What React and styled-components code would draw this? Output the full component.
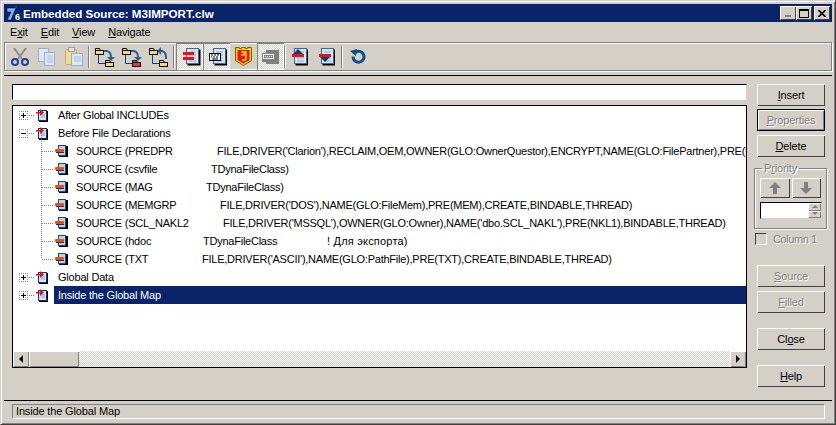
import styled, { createGlobalStyle } from 'styled-components'

const Global = createGlobalStyle`
    html, body { margin: 0; padding: 0; background: #d4d0c8; }
`

const Win = styled.div`
    width: 836px;
    height: 425px;
    box-sizing: border-box;
    background: #d4d0c8;
    border-top: 1px solid #d4d0c8;
    border-left: 1px solid #d4d0c8;
    border-right: 1px solid #404040;
    border-bottom: 1px solid #404040;
    box-shadow: inset 1px 1px 0 #fff, inset -1px -1px 0 #808080;
    padding: 3px 3px 2px 3px;
    display: flex;
    flex-direction: column;
    font-family: 'Liberation Sans', Arial, sans-serif;
    font-size: 11px;
    letter-spacing: -0.15px;
    color: #000;
    overflow: hidden;
`

const TitleBar = styled.div`
    height: 18px;
    flex: none;
    background: #0a246a;
    color: #fff;
    display: flex;
    align-items: center;
    padding: 0 2px;
    font-size: 11.6px;
    letter-spacing: 0;
    font-weight: bold;
`

const TitleText = styled.span`
    flex: 1;
    margin-left: 1px;
`

const CapButton = styled.div`
    width: 16px;
    height: 14px;
    background: #d4d0c8;
    box-shadow: inset 1px 1px 0 #fff, inset -1px -1px 0 #404040;
    margin-left: ${({ $gap }) => $gap || 0}px;
    display: flex;
    align-items: center;
    justify-content: center;
`

const MenuBar = styled.div`
    height: 20px;
    flex: none;
    display: flex;
    align-items: center;
    padding-left: 6px;
    gap: 13px;
`

const Under = styled.span`
    text-decoration: underline;
`

const ToolBar = styled.div`
    height: 29px;
    flex: none;
    box-sizing: border-box;
    border: 1px solid #808080;
    box-shadow: 1px 1px 0 #fff, inset 1px 1px 0 #fff;
    display: flex;
    align-items: center;
    padding-left: 1px;
`

const ToolButton = styled.div`
    width: 27px;
    height: 25px;
    flex: none;
    display: flex;
    align-items: center;
    justify-content: center;
    ${({ $on }) => $on && `
        height: 27px;
        background-color: #fff;
        background-image: conic-gradient(#d4d0c8 25%, #fff 0 50%, #d4d0c8 0 75%, #fff 0);
        background-size: 2px 2px;
        box-shadow: inset 1px 1px 0 #808080, inset -1px -1px 0 #fff;
    `}
    ${({ $flat }) => $flat && `
        height: 27px;
        box-shadow: inset 0 -1px 0 #fff;
    `}
`

const ToolSep = styled.div`
    width: 2px;
    height: 22px;
    flex: none;
    margin: 0 ${({ $tight }) => ($tight ? 0 : 1)}px;
    background: #808080;
    border-right: 1px solid #fff;
    box-sizing: border-box;
`

const Rule = styled.div`
    height: 1px;
    flex: none;
    margin-top: 4px;
    background: #000;
`

const Body = styled.div`
    flex: 1;
    min-height: 0;
    display: flex;
    padding: 8px 0 0 8px;
`

const LeftCol = styled.div`
    width: 735px;
    display: flex;
    flex-direction: column;
    gap: 5px;
`

const Input = styled.div`
    height: 16px;
    flex: none;
    box-sizing: border-box;
    background: #fff;
    border: 1px solid #000;
    border-right-color: #d4d0c8;
    border-bottom-color: #fff;
`

const Tree = styled.div`
    height: 263px;
    flex: none;
    box-sizing: border-box;
    background: #fff;
    border: 1px solid #000;
    display: flex;
    flex-direction: column;
`

const Rows = styled.div`
    flex: 1;
    min-height: 0;
    overflow: hidden;
`

const Row = styled.div`
    height: 18px;
    display: flex;
    align-items: center;
    white-space: nowrap;
    position: relative;
    padding-left: ${({ $child }) => ($child ? 28 : 6)}px;
`

const Expander = styled.div`
    width: 9px;
    height: 9px;
    flex: none;
    box-sizing: border-box;
    border: 1px dotted #6a8fb5;
    background: #fff;
    position: relative;
    &::before {
        content: '';
        position: absolute;
        left: 1px;
        top: 3px;
        width: 5px;
        height: 1px;
        background: #000;
    }
    &::after {
        content: '';
        display: ${({ $open }) => ($open ? 'none' : 'block')};
        position: absolute;
        left: 3px;
        top: 1px;
        width: 1px;
        height: 5px;
        background: #000;
    }
`

const Dots = styled.div`
    width: ${({ $w }) => $w}px;
    flex: none;
    height: 1px;
    margin: 0 1px;
    background-image: linear-gradient(90deg, #808080 50%, transparent 50%);
    background-size: 2px 1px;
`

const Branch = styled.div`
    position: absolute;
    left: 28px;
    top: -9px;
    width: 1px;
    height: 18px;
    background-image: linear-gradient(#808080 50%, transparent 50%);
    background-size: 1px 2px;
`

const Label = styled.span`
    margin-left: 6px;
    height: 18px;
    line-height: 18px;
    flex: 1;
    padding-left: 4px;
    min-width: 0;
    letter-spacing: -0.2px;
    background: ${({ $sel }) => ($sel ? '#0a246a' : 'transparent')};
    color: ${({ $sel }) => ($sel ? '#fff' : '#000')};
`

const SrcLabel = styled.span`
    margin-left: 8px;
    display: flex;
`

const SrcName = styled.span`
    width: ${({ $w }) => $w}px;
    flex: none;
    letter-spacing: -0.2px;
`

const SrcRest = styled.span`
    width: ${({ $w }) => ($w ? `${$w}px` : 'auto')};
    flex: none;
    letter-spacing: -0.24px;
`

const SrcNote = styled.span`
    letter-spacing: 0.2px;
`

const HScroll = styled.div`
    height: 16px;
    flex: none;
    display: flex;
    background-color: #fff;
    background-image: conic-gradient(#d4d0c8 25%, #fff 0 50%, #d4d0c8 0 75%, #fff 0);
    background-size: 2px 2px;
`

const ScrollBtn = styled.div`
    width: ${({ $w }) => $w || 16}px;
    height: 16px;
    flex: none;
    box-sizing: border-box;
    background: #d4d0c8;
    box-shadow: inset 1px 1px 0 #fff, inset -1px -1px 0 #808080, inset 0 -1px 0 #404040;
    display: flex;
    align-items: center;
    justify-content: center;
    margin-left: ${({ $push }) => ($push ? 'auto' : '0')};
`

const Side = styled.div`
    width: 68px;
    margin-left: 10px;
    display: flex;
    flex-direction: column;
`

const Btn = styled.div`
    height: 22px;
    flex: none;
    box-sizing: border-box;
    background: #d4d0c8;
    box-shadow: inset 1px 1px 0 #fff, inset -1px -1px 0 #404040;
    display: flex;
    align-items: center;
    justify-content: center;
    margin-top: ${({ $mt }) => $mt || 0}px;
    color: ${({ $off }) => ($off ? '#808080' : '#000')};
    text-shadow: ${({ $off }) => ($off ? '1px 1px 0 #fff' : 'none')};
    ${({ $def }) => $def && `
        border: 1px solid #000;
        box-shadow: inset 1px 1px 0 #fff, inset -1px -1px 0 #808080;
    `}
`

const Group = styled.fieldset`
    margin: 5px -2px 0 -3px;
    padding: 0 5px;
    height: 67px;
    box-sizing: border-box;
    border: 1px solid #808080;
    box-shadow: 1px 1px 0 #fff, inset 1px 1px 0 #fff;
    color: #808080;
    text-shadow: 1px 1px 0 #fff;
    display: block;
    min-width: 0;
`

const Legend = styled.legend`
    padding: 0 2px;
    margin-left: 2px;
    line-height: 12px;
`

const ArrowRow = styled.div`
    display: flex;
    gap: 2px;
    margin-top: 4px;
`

const ArrowBtn = styled.div`
    width: 30px;
    height: 20px;
    background: #d4d0c8;
    box-shadow: inset 1px 1px 0 #fff, inset -1px -1px 0 #404040;
    display: flex;
    align-items: center;
    justify-content: center;
`

const Spin = styled.div`
    margin-top: 4px;
    height: 17px;
    width: 62px;
    box-sizing: border-box;
    background: #fff;
    border: 1px solid #000;
    border-right-color: #d4d0c8;
    border-bottom-color: #d4d0c8;
    display: flex;
    justify-content: flex-end;
`

const SpinCol = styled.div`
    width: 13px;
    display: flex;
    flex-direction: column;
`

const SpinBtn = styled.div`
    flex: 1;
    background: #d4d0c8;
    box-shadow: inset 1px 1px 0 #fff, inset -1px -1px 0 #808080;
    display: flex;
    align-items: center;
    justify-content: center;
`

const CheckRow = styled.div`
    display: flex;
    align-items: center;
    gap: 6px;
    margin: 3px 0 0 -2px;
    height: 13px;
    color: #808080;
    text-shadow: 1px 1px 0 #fff;
    white-space: nowrap;
    letter-spacing: -0.4px;
`

const CheckBox = styled.div`
    width: 12px;
    height: 12px;
    flex: none;
    box-sizing: border-box;
    border: 1px solid #404040;
    border-right-color: #fff;
    border-bottom-color: #fff;
`

const Status = styled.div`
    flex: none;
    border-top: 1px solid #000;
    padding: 3px 7px 3px 8px;
`

const StatusPane = styled.div`
    height: 15px;
    line-height: 13px;
    box-sizing: border-box;
    padding-left: 3px;
    border: 1px solid #808080;
    border-right-color: #fff;
    border-bottom-color: #fff;
`

function Tri({ dir }) {
    const pts = { left: '5,0 5,8 1,4', right: '1,0 1,8 5,4', up: '0,3 6,3 3,0', down: '0,0 6,0 3,3' }
    const small = dir === 'up' || dir === 'down'
    return (
        <svg width="6" height={small ? 4 : 8}>
            <polygon points={pts[dir]} fill={small ? '#808080' : '#000'} />
        </svg>
    )
}

function NodeIcon() {
    return (
        <svg width="12" height="13" viewBox="0 0 12 13" style={{ flex: 'none' }}>
            <rect x="2.5" y="1.5" width="8" height="10" fill="#d6e4f5" stroke="#12306a" />
            <path d="M5 6h4M5 8h4" stroke="#8aa8cc" />
            <rect x="3" y="12" width="9" height="1" fill="#000" />
            <rect x="11" y="2" width="1" height="11" fill="#000" />
            <path d="M0 3h4V0l4 3.5L4 7V4.500H0z" fill="#e81010" />
        </svg>
    )
}

function SrcIcon() {
    return (
        <svg width="13" height="12" viewBox="0 0 13 12" style={{ flex: 'none' }}>
            <rect x="3.5" y="0.5" width="7" height="10" fill="#bcd2ea" stroke="#1a4a8a" />
            <rect x="4" y="11" width="9" height="1" fill="#000" />
            <rect x="11" y="1" width="2" height="11" fill="#000" />
            <rect x="0" y="4" width="9" height="3" rx="1" fill="#e85010" />
            <rect x="1" y="7" width="8" height="1" fill="#12306a" />
        </svg>
    )
}

function Doc({ x = 0, y = 0, fill = '#dbe6f4', w = 13, h = 16 }) {
    return (
        <g transform={`translate(${x} ${y})`}>
            <rect x="1.500" y="1.500" width={w} height={h} fill="#000" />
            <rect x="0.5" y="0.5" width={w - 1} height={h - 1} fill={fill} stroke="#3a68a0" />
            <path d={`M3 4h${w - 6}M3 7h${w - 6}M3 10h${w - 6}M3 13h${w - 6}`} stroke="#8aa8cc" />
        </g>
    )
}

function Scissors() {
    return (
        <svg width="18" height="18" viewBox="0 0 18 18">
            <path d="M3 0l8 11M15 0L7 11" stroke="#8c8c8c" strokeWidth="2" />
            <circle cx="4" cy="14" r="3" fill="none" stroke="#1f3f9c" strokeWidth="2" />
            <circle cx="14" cy="14" r="3" fill="none" stroke="#1f3f9c" strokeWidth="2" />
        </svg>
    )
}

function CopyIcon() {
    return (
        <svg width="18" height="18" viewBox="0 0 18 18">
            <rect x="0.5" y="0.5" width="10" height="13" fill="#dce6f5" stroke="#9ab0d0" />
            <rect x="6.5" y="4.5" width="10" height="13" fill="#dce6f5" stroke="#9ab0d0" />
            <path d="M9 8h6M9 10h6M9 12h6M9 14h6" stroke="#aac0dc" />
        </svg>
    )
}

function PasteIcon() {
    return (
        <svg width="18" height="19" viewBox="0 0 18 19">
            <rect x="0.5" y="2.5" width="11" height="15" rx="1" fill="#f6d98c" stroke="#c8a860" />
            <rect x="3.5" y="0.5" width="6" height="4" fill="#e8e4d8" stroke="#a0a0a0" />
            <rect x="6.5" y="6.5" width="11" height="12" fill="#dce6f5" stroke="#9ab0d0" />
            <path d="M9 10h7M9 12h7M9 14h7" stroke="#aac0dc" />
        </svg>
    )
}

function Folder({ x, y, fill = '#ffd860' }) {
    return (
        <g transform={`translate(${x} ${y})`}>
            <path d="M0.5 2.5V0.5h4l1 2z" fill={fill} stroke="#000" />
            <rect x="0.5" y="2.5" width="8" height="4" fill={fill} stroke="#000" />
        </g>
    )
}

function FolderMove({ red, back }) {
    return (
        <svg width="20" height="20" viewBox="0 0 20 20">
            <path d="M3.5 8v8.500H11" fill="none" stroke="#12406e" />
            <path d={back ? 'M9 4h4q4 1 4 6v2' : 'M9 4h3q4 1 4 6'} fill="none" stroke="#2a5f9a" strokeWidth="2" />
            {back
                ? <polygon points="12,0 12,8 8,4" fill="#2a5f9a" />
                : <polygon points="12,10 20,10 16,14" fill="#2a5f9a" />}
            <Folder x={0} y={1} />
            <Folder x={10} y={13} fill={red ? '#ee3344' : '#ffd860'} />
        </svg>
    )
}

function RedLines() {
    return (
        <svg width="18" height="18" viewBox="0 0 18 18" style={{ marginLeft: 5 }}>
            <Doc x={3} y={0} />
            <rect x="0" y="4" width="11" height="3" fill="#ee1111" />
            <rect x="0" y="9" width="11" height="3" fill="#ee1111" />
        </svg>
    )
}

function Keys() {
    return (
        <svg width="18" height="18" viewBox="0 0 18 18" style={{ marginLeft: 3 }}>
            <Doc x={4} y={0} />
            <rect x="0.5" y="5.5" width="11" height="7" fill="#fff" stroke="#000" />
            <path d="M2 7h2M5 7h2M8 7h2M2 9h1M4 9h2M7 9h2M3 11h6" stroke="#000" />
        </svg>
    )
}

function Shield() {
    return (
        <svg width="17" height="19" viewBox="0 0 17 19">
            <path d="M0.5 0.5h4v1h2v-1h4v1h2v-1h4v13l-8 5-8-5z" fill="#e8d810" stroke="#806000" />
            <path d="M2.500 3h12v10l-6 3.500-6-3.500z" fill="#ee1122" />
            <path d="M6 5h5v6q0 3-4 2M9 5v3H6" fill="none" stroke="#e8d810" strokeWidth="1.6" />
        </svg>
    )
}

function GreyBox() {
    return (
        <svg width="17" height="14" viewBox="0 0 17 14">
            <path d="M4 0h13v14H4z M0 3h4v9H0z" fill="#808080" />
            <rect x="1.500" y="4.500" width="10" height="4" fill="#808080" stroke="#fff" />
            <path d="M3 6.500h7" stroke="#fff" strokeDasharray="1 1" />
        </svg>
    )
}

function DocArrow({ down }) {
    return (
        <svg width="16" height="18" viewBox="0 0 16 18">
            <Doc x={2} y={0} h={16} />
            <rect x="0" y="6" width="12" height="3" fill="#ee1111" />
            {down
                ? <polygon points="1,9 11,9 6,14" fill="#0a3a80" />
                : <polygon points="1,6 11,6 6,1" fill="#0a3a80" />}
        </svg>
    )
}

function Refresh() {
    return (
        <svg width="16" height="15" viewBox="0 0 16 15">
            <path d="M5 3.500a5.500 5.500 0 1 1-2 4" fill="none" stroke="#0f4a8a" strokeWidth="3" />
            <polygon points="0,2 7,0 6,7" fill="#0f4a8a" />
        </svg>
    )
}

function AppLogo() {
    return (
        <svg width="16" height="16" viewBox="0 0 16 16">
            <path d="M1 3h9L5 15H1l4-8H1z" fill="#7fb0f0" stroke="#000030" strokeWidth="0.5" />
            <path d="M8 0l1 2 2-1-1 2z" fill="#3f6fd0" />
            <text x="9" y="15" fontSize="9" fontWeight="bold" fontFamily="Liberation Sans" fill="#fff">6</text>
        </svg>
    )
}

const SOURCES = [
    { name: 'SOURCE (PREDPR', w: 141, rest: "FILE,DRIVER('Clarion'),RECLAIM,OEM,OWNER(GLO:OwnerQuestor),ENCRYPT,NAME(GLO:FilePartner),PRE(FIL),CREATE" },
    { name: 'SOURCE (csvfile', w: 135, rest: 'TDynaFileClass)' },
    { name: 'SOURCE (MAG', w: 130, rest: 'TDynaFileClass)' },
    { name: 'SOURCE (MEMGRP', w: 144, rest: "FILE,DRIVER('DOS'),NAME(GLO:FileMem),PRE(MEM),CREATE,BINDABLE,THREAD)" },
    { name: 'SOURCE (SCL_NAKL2', w: 147, rest: "FILE,DRIVER('MSSQL'),OWNER(GLO:Owner),NAME('dbo.SCL_NAKL'),PRE(NKL1),BINDABLE,THREAD)" },
    { name: 'SOURCE (hdoc', w: 127, rest: 'TDynaFileClass', restW: 124, note: '! Для экспорта)' },
    { name: 'SOURCE (TXT', w: 126, rest: "FILE,DRIVER('ASCII'),NAME(GLO:PathFile),PRE(TXT),CREATE,BINDABLE,THREAD)" },
]

function TopRow({ open, sel, children }) {
    return (
        <Row>
            <Expander $open={open} />
            <Dots $w={6} />
            <NodeIcon />
            <Label $sel={sel}>{children}</Label>
        </Row>
    )
}

export default function App() {
    return (
        <Win>
            <Global />
            <TitleBar>
                <AppLogo />
                <TitleText>Embedded Source: M3IMPORT.clw</TitleText>
                <CapButton>
                    <svg width="8" height="8"><rect x="1" y="6" width="6" height="2" fill="#808080" /></svg>
                </CapButton>
                <CapButton>
                    <svg width="10" height="9"><rect x="0.5" y="1.5" width="9" height="7" fill="none" stroke="#000" /><rect x="0" y="0" width="10" height="2" /></svg>
                </CapButton>
                <CapButton $gap={2}>
                    <svg width="8" height="7"><path d="M0.5 0L7.5 7M7.5 0L0.5 7" stroke="#000" strokeWidth="1.6" /></svg>
                </CapButton>
            </TitleBar>
            <MenuBar>
                <span>E<Under>x</Under>it</span>
                <span><Under>E</Under>dit</span>
                <span><Under>V</Under>iew</span>
                <span><Under>N</Under>avigate</span>
            </MenuBar>
            <ToolBar>
                <ToolButton><Scissors /></ToolButton>
                <ToolButton><CopyIcon /></ToolButton>
                <ToolButton><PasteIcon /></ToolButton>
                <ToolSep />
                <ToolButton><FolderMove /></ToolButton>
                <ToolButton><FolderMove red /></ToolButton>
                <ToolButton><FolderMove back /></ToolButton>
                <ToolSep />
                <ToolButton $on><RedLines /></ToolButton>
                <ToolButton $on><Keys /></ToolButton>
                <ToolButton $flat><Shield /></ToolButton>
                <ToolButton $on><GreyBox /></ToolButton>
                <ToolSep $tight />
                <ToolButton><DocArrow /></ToolButton>
                <ToolButton><DocArrow down /></ToolButton>
                <ToolSep />
                <ToolButton><Refresh /></ToolButton>
            </ToolBar>
            <Rule />
            <Body>
                <LeftCol>
                    <Input />
                    <Tree>
                        <Rows>
                            <TopRow>After Global INCLUDEs</TopRow>
                            <TopRow open>Before File Declarations</TopRow>
                            {SOURCES.map((s) => (
                                <Row $child key={s.name}>
                                    <Branch />
                                    <Dots $w={12} />
                                    <SrcIcon />
                                    <SrcLabel>
                                        <SrcName $w={s.w}>{s.name}</SrcName>
                                        <SrcRest $w={s.restW}>{s.rest}</SrcRest>
                                        {s.note && <SrcNote>{s.note}</SrcNote>}
                                    </SrcLabel>
                                </Row>
                            ))}
                            <TopRow>Global Data</TopRow>
                            <TopRow sel>Inside the Global Map</TopRow>
                        </Rows>
                        <HScroll>
                            <ScrollBtn><Tri dir="left" /></ScrollBtn>
                            <ScrollBtn $w={50} />
                            <ScrollBtn $push><Tri dir="right" /></ScrollBtn>
                        </HScroll>
                    </Tree>
                </LeftCol>
                <Side>
                    <Btn><span><Under>I</Under>nsert</span></Btn>
                    <Btn $off $def $mt={3}><span><Under>P</Under>roperties</span></Btn>
                    <Btn $mt={4}><span><Under>D</Under>elete</span></Btn>
                    <Group>
                        <Legend>P<Under>r</Under>iority</Legend>
                        <ArrowRow>
                            <ArrowBtn>
                                <svg width="12" height="12"><path d="M6 0l6 6H8v6H4V6H0z" fill="#808080" /></svg>
                            </ArrowBtn>
                            <ArrowBtn>
                                <svg width="12" height="12"><path d="M6 12l6-6H8V0H4v6H0z" fill="#808080" /></svg>
                            </ArrowBtn>
                        </ArrowRow>
                        <Spin>
                            <SpinCol>
                                <SpinBtn><Tri dir="up" /></SpinBtn>
                                <SpinBtn><Tri dir="down" /></SpinBtn>
                            </SpinCol>
                        </Spin>
                    </Group>
                    <CheckRow>
                        <CheckBox />
                        <span>Column 1</span>
                    </CheckRow>
                    <Btn $off $mt={20}><span><Under>S</Under>ource</span></Btn>
                    <Btn $off $mt={4}><span><Under>F</Under>illed</span></Btn>
                    <Btn $mt={15}><span>Cl<Under>o</Under>se</span></Btn>
                    <Btn $mt={15}><span><Under>H</Under>elp</span></Btn>
                </Side>
            </Body>
            <Status>
                <StatusPane>Inside the Global Map</StatusPane>
            </Status>
        </Win>
    )
}
